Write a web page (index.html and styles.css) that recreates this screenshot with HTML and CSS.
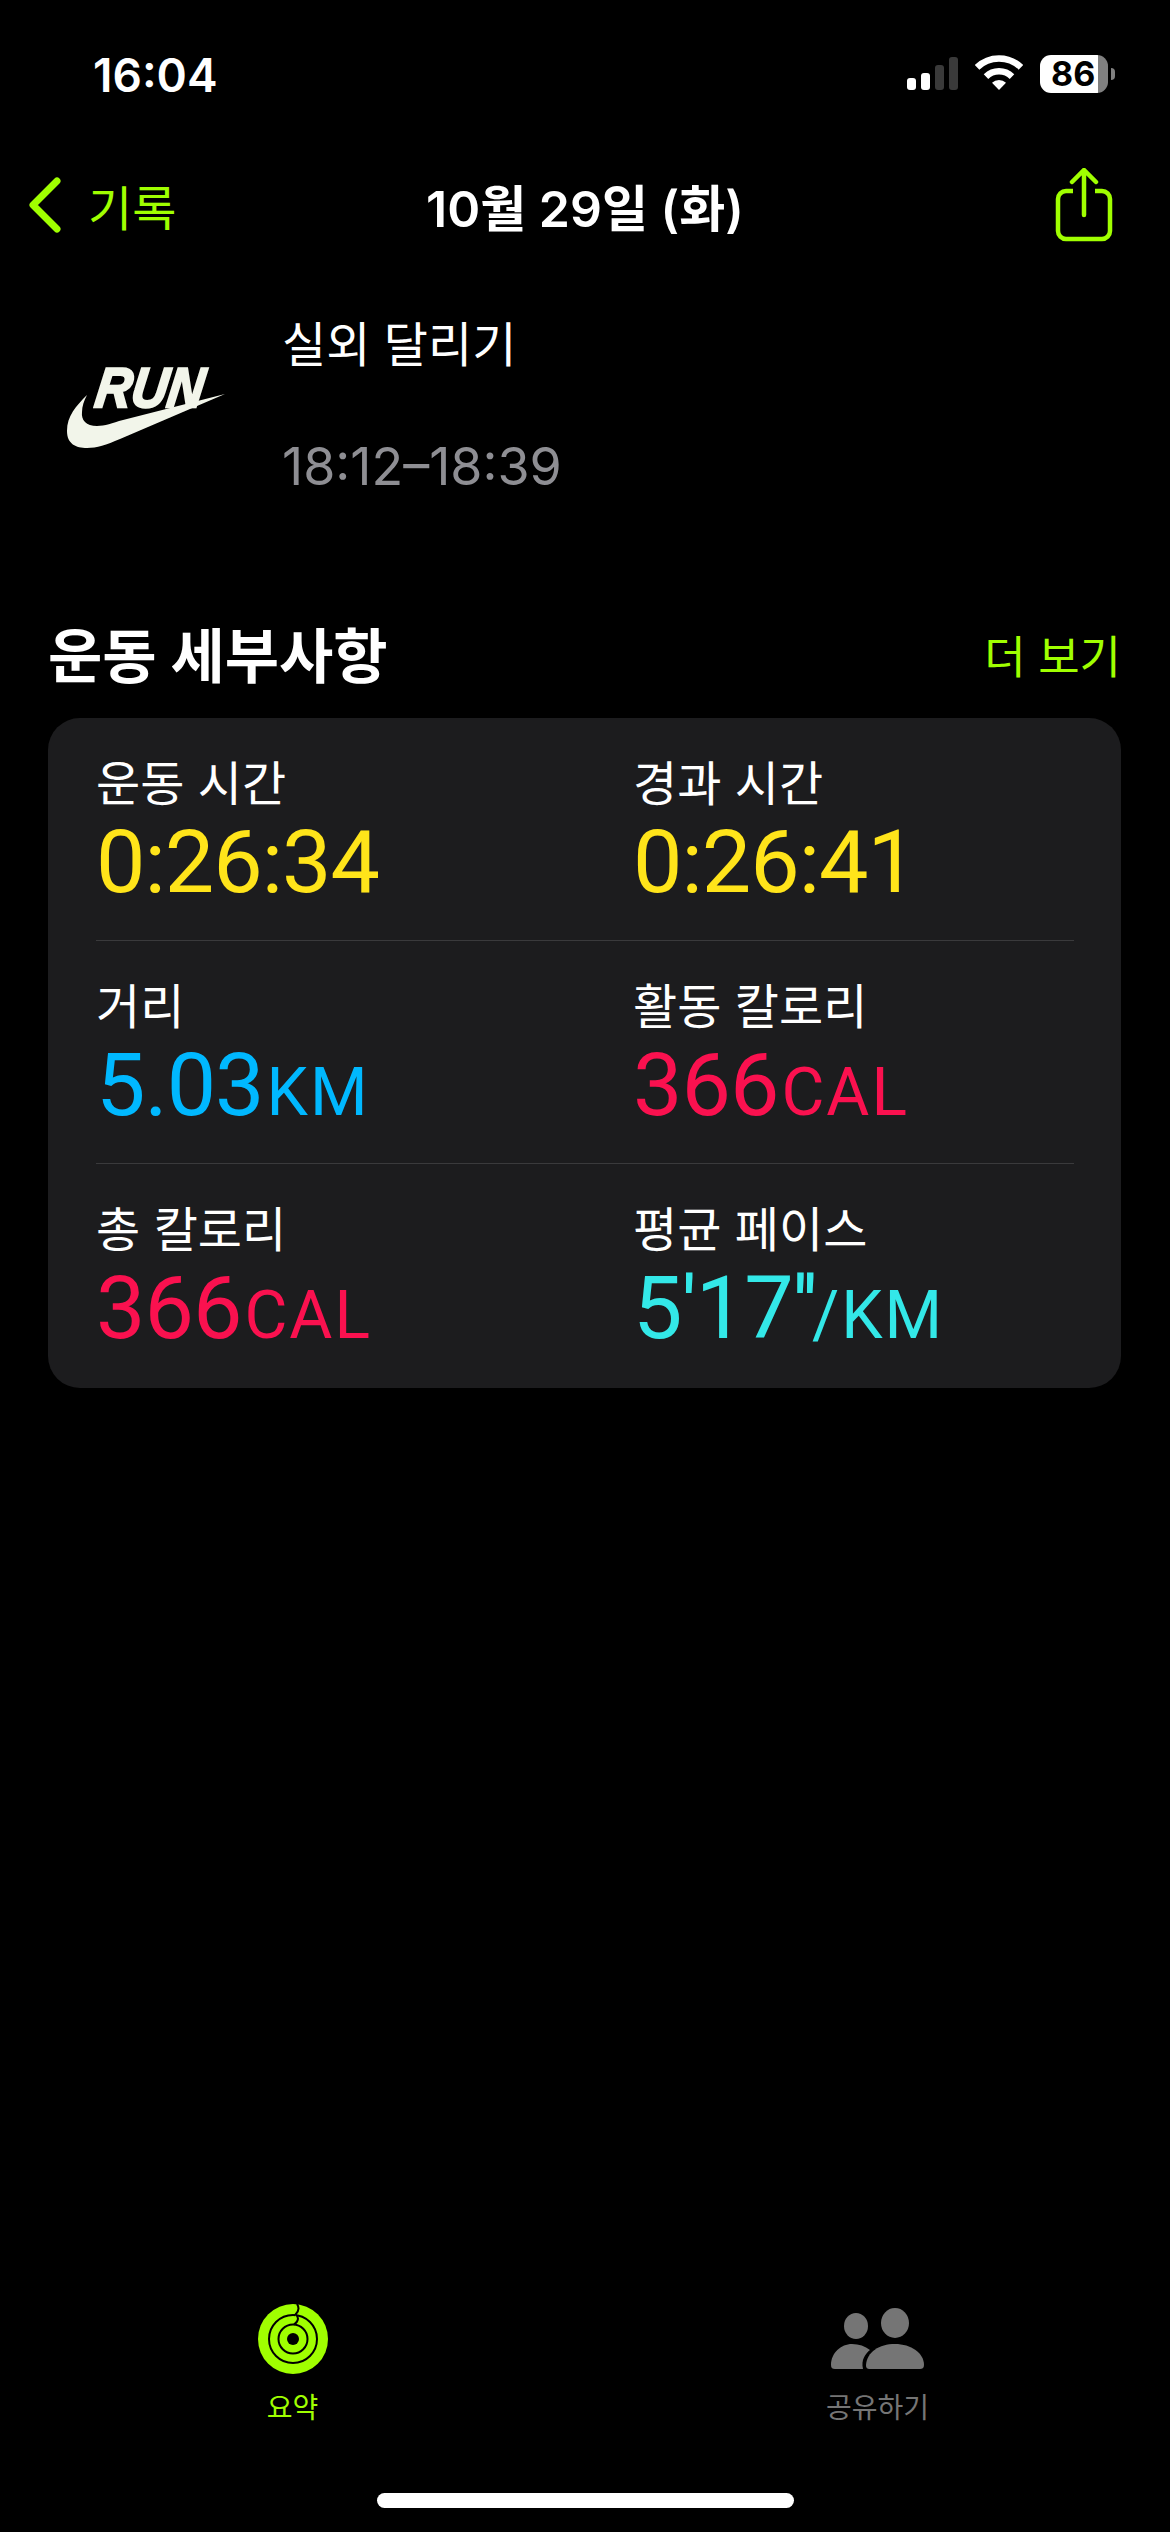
FILE: index.html
```html
<!DOCTYPE html>
<html lang="ko">
<head>
    <meta charset="UTF-8">
    <meta name="viewport" content="width=device-width, initial-scale=1.0">
    <title>운동 세부사항</title>
    <link rel="stylesheet" href="styles.css">
</head>
<body>
    <div class="status-bar">
        <span class="clock">16:04</span>
        <div class="status-icons">
            <div class="signal">
                <span class="bar bar-1"></span>
                <span class="bar bar-2"></span>
                <span class="bar bar-3 off"></span>
                <span class="bar bar-4 off"></span>
            </div>
            <svg class="wifi" width="48" height="36" viewBox="0 0 48 36">
                <path d="M2.1 12.3 A31.5 31.5 0 0 1 45.9 12.3" fill="none" stroke="#fff" stroke-width="6.5"/>
                <path d="M11 21.6 A18.7 18.7 0 0 1 37 21.6" fill="none" stroke="#fff" stroke-width="6.5"/>
                <path d="M24 35 L17 27.8 A10 10 0 0 1 31 27.8 Z" fill="#fff"/>
            </svg>
            <div class="battery">
                <div class="battery-body"><span class="battery-level">86</span></div>
                <span class="battery-cap"></span>
            </div>
        </div>
    </div>

    <div class="nav-bar">
        <div class="nav-back">
            <svg width="34" height="58" viewBox="0 0 34 58">
                <path d="M29 5 L5 29 L29 53" fill="none" stroke="#a0ff00" stroke-width="7" stroke-linecap="round" stroke-linejoin="round"/>
            </svg>
            <span>기록</span>
        </div>
        <div class="nav-title">10월 29일 (화)</div>
        <svg class="nav-share" width="58" height="74" viewBox="0 0 58 74">
            <path d="M18 23 H11 A8 8 0 0 0 3 31 V63 A8 8 0 0 0 11 71 H47 A8 8 0 0 0 55 63 V31 A8 8 0 0 0 47 23 H40" fill="none" stroke="#a0ff00" stroke-width="4.5"/>
            <path d="M29 47 V3 M17 14 L29 2 L41 14" fill="none" stroke="#a0ff00" stroke-width="4.5" stroke-linecap="round"/>
        </svg>
    </div>

    <div class="workout">
        <svg class="workout-logo" width="170" height="110" viewBox="0 -15 170 110">
            <path d="M27 35 C16 46 7 56 7 71 C7 84 16 88 27 88 C37 88 46 85 60 79 L165 34 L63 60 C52 63 45 66 37 66 C26 66 21 60 22 52 C22 46 24 41 27 35 Z" fill="#f2f5ea"/>
            <text class="run-text" x="40" y="47" textLength="108" lengthAdjust="spacingAndGlyphs" transform="skewX(-8)">RUN</text>
        </svg>
        <div class="workout-info">
            <div class="workout-name">실외 달리기</div>
            <div class="workout-time">18:12–18:39</div>
        </div>
    </div>

    <div class="section-head">
        <h2>운동 세부사항</h2>
        <span class="more">더 보기</span>
    </div>

    <div class="card">
        <div class="row">
            <div class="metric">
                <div class="metric-label">운동 시간</div>
                <div class="metric-value yellow">0:26:34</div>
            </div>
            <div class="metric">
                <div class="metric-label">경과 시간</div>
                <div class="metric-value yellow">0:26:41</div>
            </div>
        </div>
        <div class="row">
            <div class="metric">
                <div class="metric-label">거리</div>
                <div class="metric-value blue">5.03<span class="unit">KM</span></div>
            </div>
            <div class="metric">
                <div class="metric-label">활동 칼로리</div>
                <div class="metric-value red">366<span class="unit">CAL</span></div>
            </div>
        </div>
        <div class="row">
            <div class="metric">
                <div class="metric-label">총 칼로리</div>
                <div class="metric-value red">366<span class="unit">CAL</span></div>
            </div>
            <div class="metric">
                <div class="metric-label">평균 페이스</div>
                <div class="metric-value cyan">5'17''<span class="unit unit-pace">/KM</span></div>
            </div>
        </div>
    </div>

    <div class="tab-bar">
        <div class="tab active">
            <svg width="70" height="70" viewBox="0 0 70 70">
                <circle cx="35" cy="35" r="35" fill="#a0ff00"/>
                <circle cx="35" cy="35" r="24" fill="none" stroke="#000" stroke-width="2"/>
                <circle cx="35" cy="35" r="14.5" fill="none" stroke="#000" stroke-width="2"/>
                <circle cx="35" cy="35" r="6" fill="#000"/>
                <path d="M39 0 C41 3 41 7 37.5 10.5 C41 13 41 17 36 20.5" fill="#a0ff00" stroke="#000" stroke-width="2"/>
            </svg>
            <span>요약</span>
        </div>
        <div class="tab">
            <svg width="94" height="62" viewBox="0 0 94 62">
                <ellipse cx="25" cy="18" rx="12" ry="13" fill="#757575"/>
                <ellipse cx="64" cy="15" rx="14" ry="15" fill="#757575"/>
                <path d="M0 57 C0 45 10 36 21 36 C28 36 34 38 39 42 C34 46 30 52 32 61 H4 C1.5 61 0 60 0 57 Z" fill="#757575"/>
                <path d="M35 57 C36 44 48 36 64 36 C80 36 93 45 93 57 C93 60 91 61 89 61 H39 C36 61 35 60 35 57 Z" fill="#757575"/>
            </svg>
            <span>공유하기</span>
        </div>
    </div>

    <div class="home-area">
        <div class="home-indicator"></div>
    </div>
</body>
</html>
```

FILE: styles.css
```css
html, body {
    margin: 0;
    padding: 0;
}
body {
    width: 1170px;
    height: 2532px;
    background-color: #000;
    color: #fff;
    font-family: Inter, "Noto Sans CJK KR", sans-serif;
    display: flex;
    flex-direction: column;
    overflow: hidden;
}
.status-bar {
    height: 157px;
    flex-shrink: 0;
    box-sizing: border-box;
    padding: 50px 55px 0 93px;
    display: flex;
    justify-content: space-between;
    align-items: flex-start;
}
.clock {
    font-size: 46px;
    font-weight: 600;
    line-height: 50px;
}
.status-icons {
    display: flex;
    align-items: flex-end;
    margin-top: 5px;
    height: 38px;
}
.signal {
    display: flex;
    align-items: flex-end;
    gap: 5px;
    height: 33px;
    margin-right: 17px;
    margin-bottom: 3px;
}
.bar {
    width: 9px;
    border-radius: 3px;
    background-color: #fff;
}
.bar-1 { height: 12px; }
.bar-2 { height: 17px; }
.bar-3 { height: 25px; }
.bar-4 { height: 33px; }
.bar.off {
    background-color: #3a3a3a;
}
.wifi {
    margin-right: 17px;
    margin-bottom: 2px;
}
.battery {
    display: flex;
    align-items: center;
    gap: 3px;
}
.battery-body {
    width: 68px;
    height: 38px;
    border-radius: 11px;
    background: linear-gradient(to right, #fff 85%, #808080 85%);
    color: #000;
    display: flex;
    align-items: center;
    box-sizing: border-box;
    padding-left: 11px;
}
.battery-level {
    font-size: 34px;
    font-weight: 700;
    line-height: 38px;
}
.battery-cap {
    width: 4px;
    height: 12px;
    border-radius: 0 4px 4px 0;
    background-color: #808080;
}
.nav-bar {
    height: 96px;
    flex-shrink: 0;
    box-sizing: border-box;
    padding: 0 57px 0 28px;
    display: flex;
    align-items: center;
    justify-content: space-between;
    position: relative;
}
.nav-back {
    display: flex;
    align-items: center;
    gap: 26px;
    color: #a0ff00;
    font-size: 48px;
}
.nav-title {
    position: absolute;
    left: 0;
    right: 0;
    text-align: center;
    font-size: 50px;
    font-weight: 600;
}
.nav-share {
    margin-top: 0;
}
.workout {
    height: 219px;
    flex-shrink: 0;
    display: flex;
    padding: 0 0 0 60px;
    box-sizing: border-box;
}
.workout-logo {
    margin-top: 92px;
    flex-shrink: 0;
}
.run-text {
    font-family: "Liberation Sans", sans-serif;
    font-size: 56px;
    font-weight: 700;
    font-style: italic;
    fill: #f2f5ea;
    stroke: #f2f5ea;
    stroke-width: 2.5px;
}
.workout-info {
    margin-left: 52px;
    padding-top: 62px;
}
.workout-name {
    font-size: 48px;
    line-height: 60px;
}
.workout-time {
    margin-top: 62px;
    font-family: Inter, sans-serif;
    font-size: 52px;
    line-height: 60px;
    color: #8e8e93;
}
.section-head {
    height: 75px;
    flex-shrink: 0;
    margin-top: 143px;
    padding: 0 49px 0 48px;
    display: flex;
    justify-content: space-between;
    align-items: center;
}
.section-head h2 {
    margin: 0;
    font-size: 59px;
    font-weight: 700;
}
.more {
    color: #a0ff00;
    font-size: 45px;
    margin-top: 4px;
}
.card {
    flex-shrink: 0;
    margin: 28px 49px 0 48px;
    background-color: #1c1c1e;
    border-radius: 32px;
    padding: 0 47px 0 48px;
}
.row {
    height: 223px;
    display: grid;
    grid-template-columns: 537px 1fr;
    padding-top: 36px;
    box-sizing: border-box;
    border-bottom: 1px solid #3a3a3c;
}
.row:last-child {
    border-bottom: none;
    height: 224px;
}
.metric-label {
    font-size: 48px;
    line-height: 60px;
}
.metric-value {
    font-family: Roboto, sans-serif;
    font-size: 88px;
    line-height: 92px;
    margin-top: 2px;
    letter-spacing: -1px;
}
.unit {
    font-size: 66px;
    letter-spacing: 2px;
    margin-left: 3px;
}
.unit-pace {
    margin-left: -5px;
}
.yellow { color: #ffe41a; }
.blue { color: #00b8ff; }
.red { color: #fa114f; }
.cyan { color: #33e8e8; }
.tab-bar {
    margin-top: auto;
    display: grid;
    grid-template-columns: 1fr 1fr;
    height: 120px;
}
.tab {
    display: flex;
    flex-direction: column;
    align-items: center;
    color: #757575;
    font-size: 28px;
}
.tab svg {
    display: block;
    height: 70px;
}
.tab span {
    margin-top: 14px;
    line-height: 40px;
}
.tab.active {
    color: #a0ff00;
}
.home-area {
    height: 108px;
    flex-shrink: 0;
    display: flex;
    justify-content: center;
    padding-top: 69px;
    box-sizing: border-box;
}
.home-indicator {
    width: 417px;
    height: 15px;
    border-radius: 8px;
    background-color: #fff;
}
```
